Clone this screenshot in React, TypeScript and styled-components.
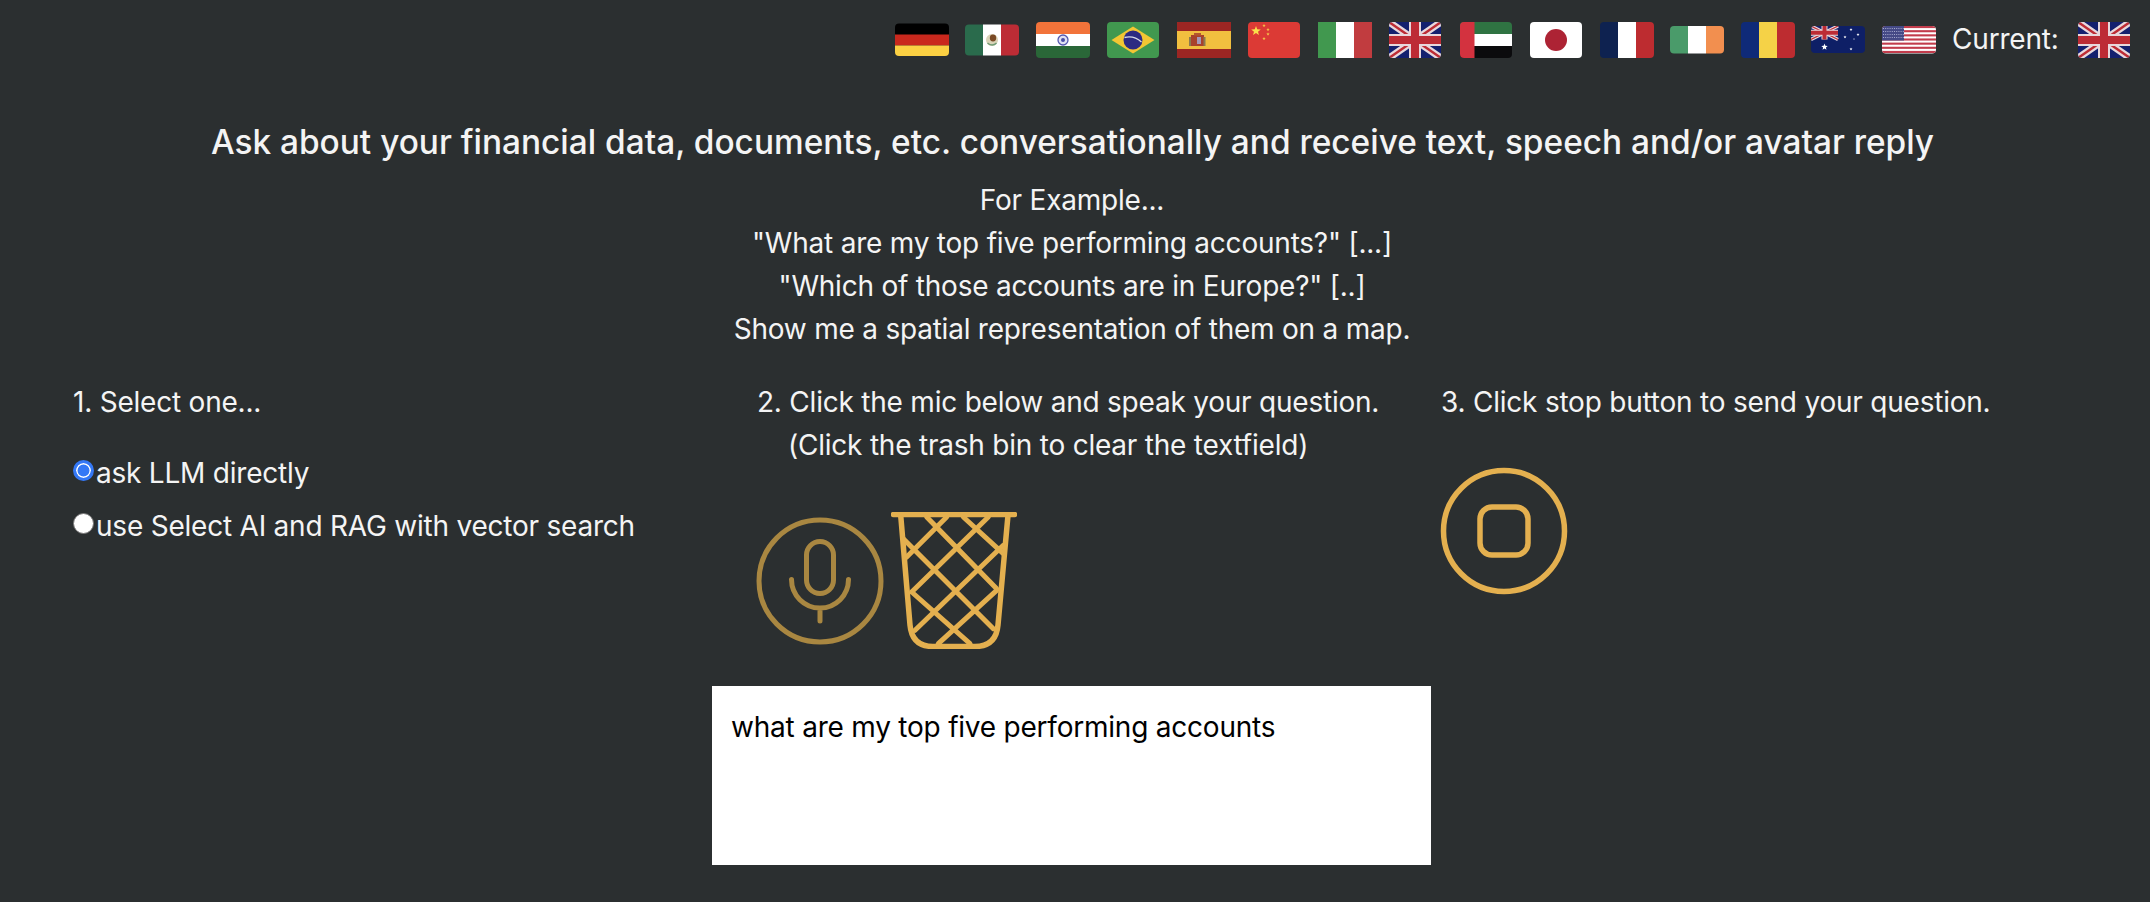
import React from "react";
import styled, { createGlobalStyle } from "styled-components";

const Global = createGlobalStyle`
  html, body { margin: 0; padding: 0; background: #2b2f30; }
  body { font-family: Inter, "Noto Sans", "Liberation Sans", sans-serif; color: #f4f4f4; letter-spacing: -0.22px; }
`;

const Page = styled.div`
  width: 2150px;
  height: 902px;
  overflow: hidden;
  background: #2b2f30;
`;
const TopBar = styled.div`
  display: flex;
  justify-content: flex-end;
  align-items: center;
  gap: 16.5px;
  padding: 22px 19px 0 0;
  height: 36px;
`;
const FlagSvg = styled.svg`
  display: block;
  width: 54px;
  height: 36px;
  flex: none;
`;
const CurrentLabel = styled.span`
  font-size: 28px;
  line-height: 34px;
  margin: 0 2px 2px 0;
`;
const Heading = styled.h1`
  margin: 60px 0 0;
  padding-right: 5px;
  font-size: 33.4px;
  line-height: 48px;
  font-weight: 500;
  letter-spacing: 0;
  text-align: center;
`;
const Examples = styled.div`
  margin-top: 13px;
  padding-right: 6px;
  text-align: center;
  font-size: 28px;
  line-height: 43px;
`;
const Columns = styled.div`
  display: grid;
  grid-template-columns: repeat(3, 684px);
  margin-top: 30px;
  padding-left: 73px;
`;
const Column = styled.div`
  font-size: 28px;
  line-height: 43px;
`;
const Indented = styled.div`
  padding-left: 31px;
`;
const RadioList = styled.div`
  margin-top: 28px;
  display: flex;
  flex-direction: column;
  gap: 10px;
`;
const RadioRow = styled.label`
  display: flex;
  align-items: flex-start;
  gap: 2px;
`;
const Radio = styled.input`
  appearance: none;
  width: 21px;
  height: 21px;
  margin: 8px 0 0;
  border-radius: 50%;
  background: #fff;
  border: 1.5px solid #767676;
  box-sizing: border-box;
  &:checked {
    border: 3px solid #3478f6;
    background: #3478f6;
    box-shadow: inset 0 0 0 1.5px #fff;
  }
`;
const MicRow = styled.div`
  display: flex;
  align-items: flex-start;
  gap: 6px;
  margin: 45px 0 0 -2px;
`;
const MicIcon = styled.svg`
  display: block;
  margin-top: 4px;
  color: #a98741;
`;
const TrashIcon = styled.svg`
  display: block;
  color: #e4b04f;
`;
const StopIcon = styled.svg`
  display: block;
  margin: 42px 0 0 -2px;
  color: #e4b04f;
`;
const Question = styled.div`
  width: 719px;
  height: 179px;
  margin: 37px 0 0 712px;
  box-sizing: border-box;
  padding: 21px 19px;
  background: #fff;
  color: #000;
  font-size: 28px;
  line-height: 40px;
`;

type FlagProps = { id: string; y?: number; h?: number; x?: number; w?: number; square?: boolean; children: React.ReactNode };
const Flag = ({ id, x = 0, y = 0, w = 54, h = 36, square, children }: FlagProps) => (
  <FlagSvg viewBox="0 0 54 36">
    <clipPath id={id}>
      <rect x={x} y={y} width={w} height={h} rx={square ? 0 : 4} />
    </clipPath>
    <g clipPath={`url(#${id})`}>{children}</g>
  </FlagSvg>
);

const Union = ({ w = 52, h = 36, n = 1 }: { w?: number; h?: number; n?: number }) => (
  <>
    <rect width={w} height={h} fill="#14206e" />
    <path d={`M0 0L${w} ${h}M${w} 0L0 ${h}`} stroke="#e8d8dc" strokeWidth={7 * n} />
    <path d={`M0 0L${w} ${h}M${w} 0L0 ${h}`} stroke="#bd2c35" strokeWidth={2.4 * n} />
    <path d={`M${w / 2} 0V${h}M0 ${h / 2}H${w}`} stroke="#e8d8dc" strokeWidth={12 * n} />
    <path d={`M${w / 2} 0V${h}M0 ${h / 2}H${w}`} stroke="#bd2c35" strokeWidth={8 * n} />
  </>
);

const Star = ({ cx, cy, r, fill }: { cx: number; cy: number; r: number; fill: string }) => {
  const pts = Array.from({ length: 10 }, (_, i) => {
    const a = -Math.PI / 2 + (i * Math.PI) / 5;
    const q = i % 2 ? r * 0.42 : r;
    return `${(cx + q * Math.cos(a)).toFixed(2)},${(cy + q * Math.sin(a)).toFixed(2)}`;
  }).join(" ");
  return <polygon points={pts} fill={fill} />;
};

const flags = [
  <Flag id="de" y={1.5} h={32.5} key="de">
    <rect y="0" width="54" height="13" fill="#000" />
    <rect y="12.5" width="54" height="11" fill="#c9281d" />
    <rect y="23.5" width="54" height="11" fill="#fbd043" />
  </Flag>,
  <Flag id="mx" y={2.5} h={31} key="mx">
    <rect width="18" height="36" fill="#2a6b4c" />
    <rect x="18" width="18" height="36" fill="#fff" />
    <rect x="36" width="18" height="36" fill="#bd2c35" />
    <ellipse cx="27" cy="18" rx="6" ry="6" fill="#d9d3b8" />
    <ellipse cx="28" cy="16" rx="3.2" ry="3.4" fill="#7a4a26" />
    <path d="M22.5 21c3 2.5 6.5 2.5 9 0" stroke="#6f9b75" strokeWidth="1.4" fill="none" />
  </Flag>,
  <Flag id="in" key="in">
    <rect width="54" height="12" fill="#f2733a" />
    <rect y="12" width="54" height="12" fill="#fff" />
    <rect y="24" width="54" height="12" fill="#2a6738" />
    <circle cx="27" cy="18" r="5" fill="#dfe0f2" stroke="#5558b0" strokeWidth="1.3" />
    <circle cx="27" cy="18" r="2" fill="#4a4da8" />
  </Flag>,
  <Flag id="br" x={1} w={52} key="br">
    <rect width="54" height="36" fill="#41984f" />
    <polygon points="5.5,18 27,4.5 48.5,18 27,31.5" fill="#f2c633" />
    <circle cx="27" cy="18" r="9.5" fill="#2c2a82" />
    <path d="M18.5 15.5c6-1.5 12 0 17 4.5" stroke="#d7dbe6" strokeWidth="1.3" fill="none" />
  </Flag>,
  <Flag id="es" square key="es">
    <rect width="54" height="36" fill="#9c2623" />
    <rect y="9" width="54" height="18" fill="#f1bf3f" />
    <rect x="14" y="13" width="13" height="11" fill="#a8422c" />
    <rect x="20" y="15" width="4" height="7" fill="#a498b8" />
    <rect x="12" y="15" width="2" height="9" fill="#8a7a50" />
    <rect x="26.5" y="15" width="2" height="9" fill="#8a7a50" />
    <rect x="17" y="11" width="7" height="2.5" fill="#b5562e" />
  </Flag>,
  <Flag id="cn" x={1} w={52} key="cn">
    <rect width="54" height="36" fill="#dc3a35" />
    <Star cx={9} cy={9} r={5} fill="#f9e04b" />
    <Star cx={17} cy={3.5} r={1.8} fill="#f5c64a" />
    <Star cx={21} cy={7.5} r={1.8} fill="#f5c64a" />
    <Star cx={21} cy={12} r={1.8} fill="#f5c64a" />
    <Star cx={17} cy={16.5} r={1.8} fill="#f5c64a" />
  </Flag>,
  <Flag id="it" square key="it">
    <rect width="18" height="36" fill="#41984f" />
    <rect x="18" width="18" height="36" fill="#fff" />
    <rect x="36" width="18" height="36" fill="#c13c3f" />
  </Flag>,
  <Flag id="gb" x={1} w={52} key="gb">
    <g transform="translate(1 0)"><Union /></g>
  </Flag>,
  <Flag id="ae" x={1} w={52} key="ae">
    <rect y="0" width="54" height="13" fill="#2f7342" />
    <rect y="12" width="54" height="12" fill="#fff" />
    <rect y="24" width="54" height="12" fill="#0b0b0d" />
    <rect width="15.5" height="36" fill="#d3323f" />
  </Flag>,
  <Flag id="jp" x={1} w={52} key="jp">
    <rect width="54" height="36" fill="#fff" />
    <circle cx="27" cy="18" r="11" fill="#ad2334" />
  </Flag>,
  <Flag id="fr" key="fr">
    <rect width="18" height="36" fill="#0e2250" />
    <rect x="18" width="18" height="36" fill="#fff" />
    <rect x="36" width="18" height="36" fill="#bd2c30" />
  </Flag>,
  <Flag id="ie" y={4} h={27.5} key="ie">
    <rect width="18" height="36" fill="#4a9b6a" />
    <rect x="18" width="18" height="36" fill="#fff" />
    <rect x="36" width="18" height="36" fill="#f28f4f" />
  </Flag>,
  <Flag id="ro" key="ro">
    <rect width="18" height="36" fill="#0f2a78" />
    <rect x="18" width="18" height="36" fill="#f5d247" />
    <rect x="36" width="18" height="36" fill="#bd2c30" />
  </Flag>,
  <Flag id="au" y={4} h={27} key="au">
    <rect width="54" height="36" fill="#0e1f66" />
    <g transform="translate(0 4)"><Union w={27} h={13.5} n={0.5} /></g>
    <Star cx={13.5} cy={25} r={3.4} fill="#fff" />
    <Star cx={40} cy={7.5} r={1.6} fill="#fff" />
    <Star cx={40} cy={27} r={1.6} fill="#fff" />
    <Star cx={34} cy={15} r={1.6} fill="#fff" />
    <Star cx={47} cy={12.5} r={1.6} fill="#fff" />
    <Star cx={43} cy={17} r={0.9} fill="#fff" />
  </Flag>,
  <Flag id="us" y={4} h={27.5} key="us">
    <rect width="54" height="36" fill="#fff" />
    {[0, 1, 2, 3, 4, 5, 6].map((i) => (
      <rect key={i} y={4 + i * 4.15} width="54" height="2.1" fill="#c23c4c" />
    ))}
    <rect y="4" width="22" height="14.5" fill="#454a86" />
    <path d="M1 6.5H22M1 9.5H22M1 12.5H22M1 15.5H22" stroke="#a8abcf" strokeWidth="1" strokeDasharray="1 1.2" />
  </Flag>,
];

const Mic = () => (
  <MicIcon width="130" height="130" viewBox="0 0 130 130" fill="none" stroke="currentColor" strokeWidth="5" strokeLinecap="round">
    <circle cx="65" cy="65" r="61" />
    <rect x="51.5" y="25.5" width="27" height="52" rx="13.5" />
    <path d="M36.5 63.5a28.5 28.5 0 0 0 57 0M65 92v13" />
  </MicIcon>
);

const Trash = () => (
  <TrashIcon width="126" height="137" viewBox="0 0 126 137" fill="none" stroke="currentColor" strokeLinecap="round" strokeLinejoin="round">
    <path d="M2.5 2.5H123.5" strokeWidth="5.5" />
    <path d="M9.7 3.3L19 113Q21 134.5 42 134.5H84Q105 134.5 107 113L117 3.3" strokeWidth="5.5" />
    <path
      d="M35.7 5L105.7 76.7M72.3 5L112.3 41.7M12.3 26.7L102.3 116.7M20.7 80L79 131.7M55.7 5L15.7 45M97.3 5L20.7 80M112.3 33.3L24 118.3M105.7 78.3L47.3 131.7"
      strokeWidth="5"
    />
  </TrashIcon>
);

const Stop = () => (
  <StopIcon width="130" height="130" viewBox="0 0 130 130" fill="none" stroke="currentColor" strokeWidth="5.5">
    <circle cx="65" cy="65" r="60.5" />
    <rect x="41" y="41" width="48" height="48" rx="12" />
  </StopIcon>
);

export default function App() {
  return (
    <Page>
      <Global />
      <TopBar>
        {flags}
        <CurrentLabel>Current:</CurrentLabel>
        <Flag id="cur" x={1} w={52}>
          <g transform="translate(1 0)"><Union /></g>
        </Flag>
      </TopBar>
      <Heading>Ask about your financial data, documents, etc. conversationally and receive text, speech and/or avatar reply</Heading>
      <Examples>
        <div>For Example...</div>
        <div>"What are my top five performing accounts?" [...]</div>
        <div>"Which of those accounts are in Europe?" [..]</div>
        <div>Show me a spatial representation of them on a map.</div>
      </Examples>
      <Columns>
        <Column>
          <div>1. Select one...</div>
          <RadioList>
            <RadioRow>
              <Radio type="radio" name="mode" defaultChecked />
              ask LLM directly
            </RadioRow>
            <RadioRow>
              <Radio type="radio" name="mode" />
              use Select AI and RAG with vector search
            </RadioRow>
          </RadioList>
        </Column>
        <Column>
          <div>2. Click the mic below and speak your question.</div>
          <Indented>(Click the trash bin to clear the textfield)</Indented>
          <MicRow>
            <Mic />
            <Trash />
          </MicRow>
        </Column>
        <Column>
          <div>3. Click stop button to send your question.</div>
          <Stop />
        </Column>
      </Columns>
      <Question>what are my top five performing accounts</Question>
    </Page>
  );
}
